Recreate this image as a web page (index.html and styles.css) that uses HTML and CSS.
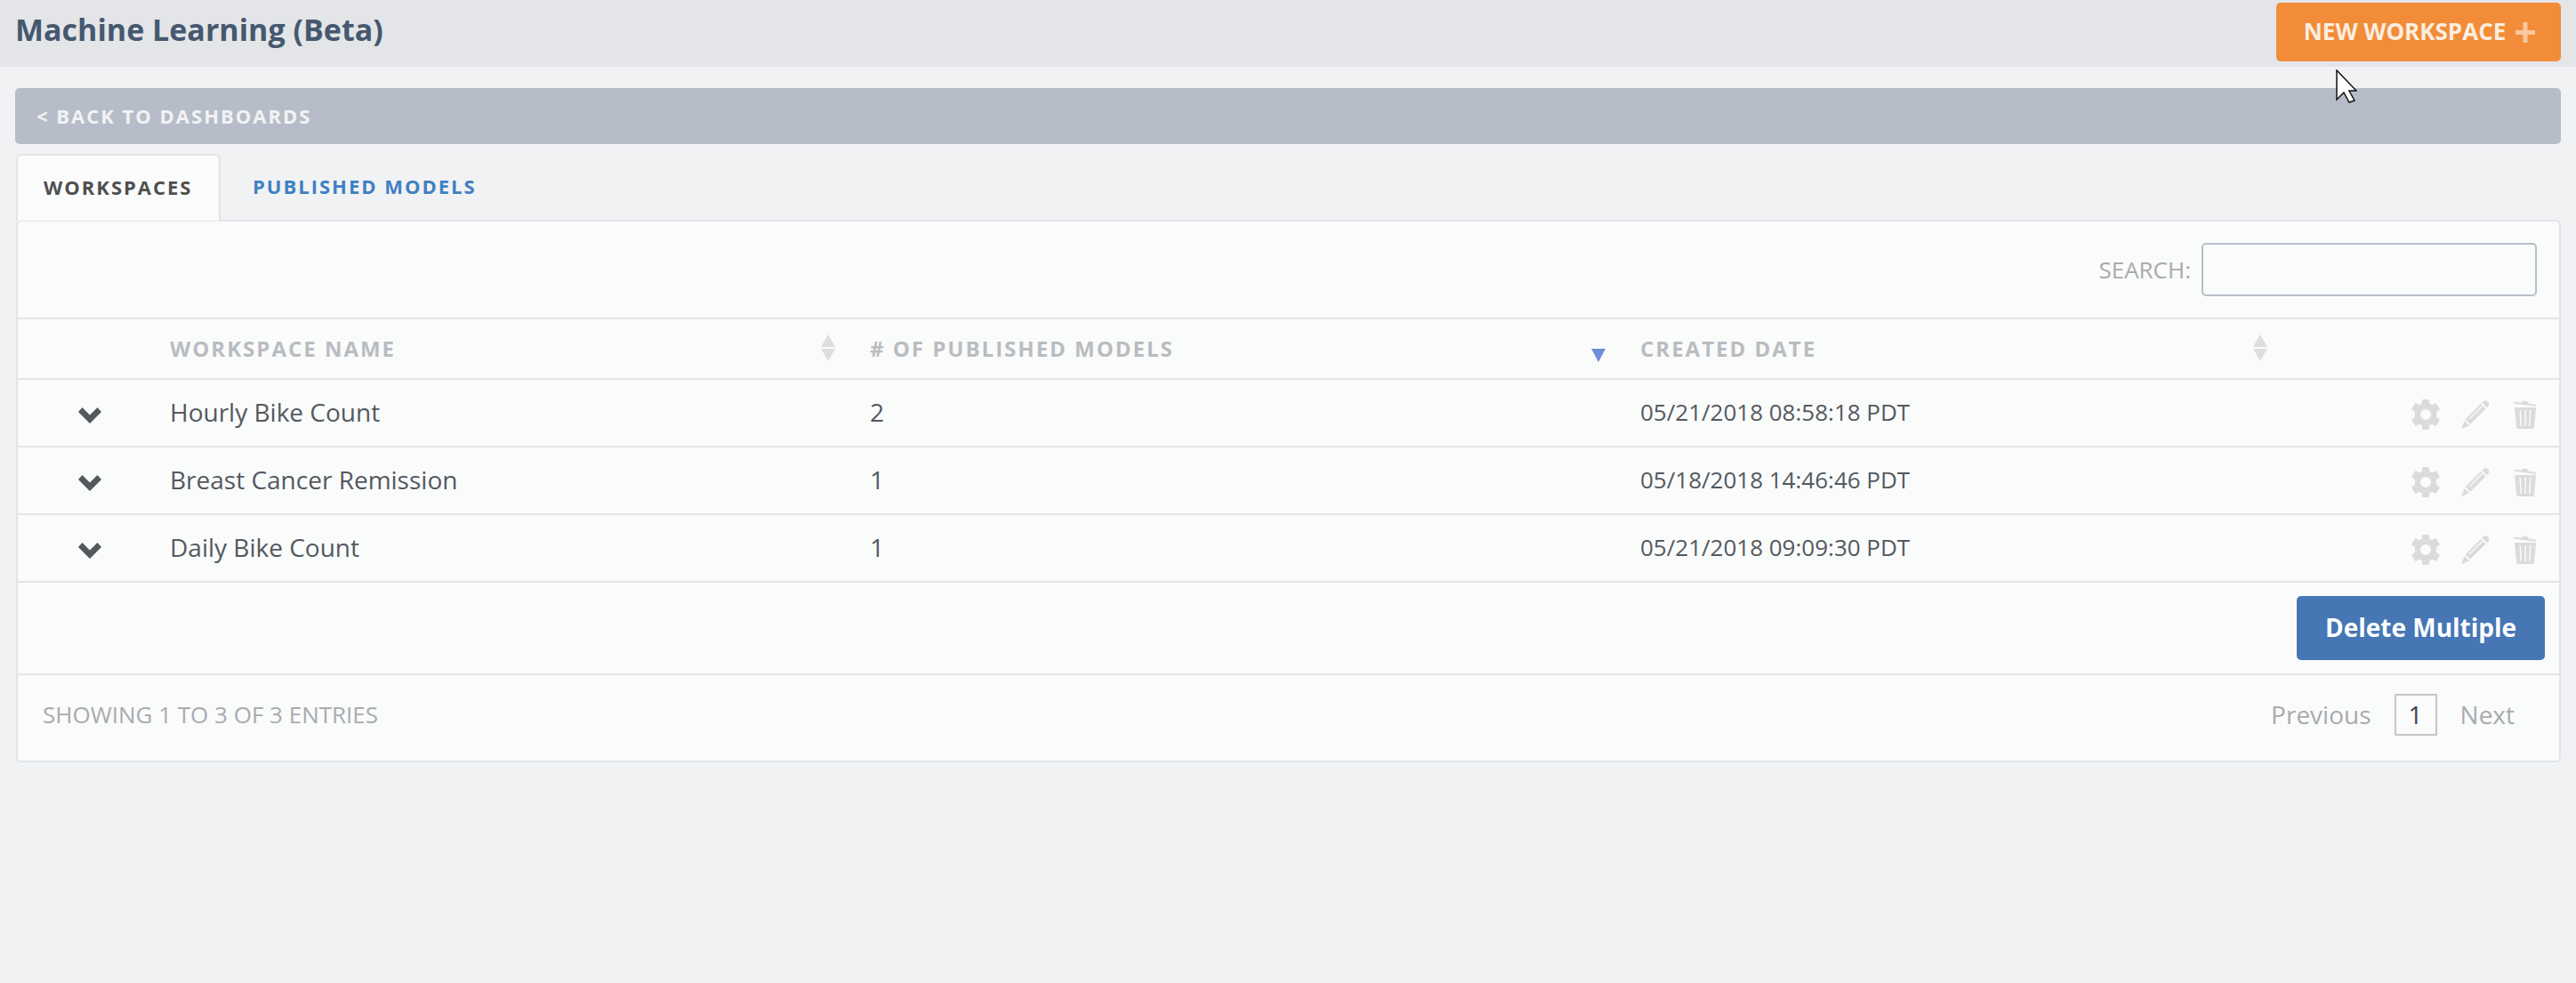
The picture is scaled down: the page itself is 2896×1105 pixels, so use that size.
FILE: index.html
```html
<!DOCTYPE html>
<html lang="en">
<head>
  <meta charset="UTF-8" />
  <title>Machine Learning (Beta)</title>
  <link rel="stylesheet" href="styles.css">
</head>
<body>

<svg width="0" height="0" class="defs">
  <defs>
    <symbol id="gear" viewBox="0 0 32 34">
      <path fill-rule="evenodd" d="M12.500 0h7l1 5 2.500 1.200 4.500-2.200 4.500 7-4 3.200v5.600l4 3.200-4.500 7-4.500-2.200-2.500 1.200-1 5h-7l-1-5-2.500-1.200-4.500 2.200-4.500-7 4-3.200v-5.600l-4-3.200 4.500-7 4.500 2.200 2.500-1.200zM16 11a6 6 0 1 0 0 12 6 6 0 0 0 0-12z"/>
    </symbol>
    <symbol id="pencil" viewBox="0 0 32 32">
      <path d="M25 1.200c1.500-1.300 3.500-1.300 5 .2s1.600 3.400.3 5l-1.500 1.700-5.400-5.400zM22 4l5.500 5.500-17.300 17.300-5.500-5.500zM3.600 23l5.500 5.500-9 3.500z"/>
      <path d="M8.500 20.500 23.500 5.500 24.500 6.500 9.500 21.500z" fill="#fafbfb"/>
    </symbol>
    <symbol id="trash" viewBox="0 0 26 32">
      <path d="M9.500 0.500l7 1-.3 2 8.800 1.500-.3 2L0 3.500l.3-2 8.800 1.300z"/>
      <path fill-rule="evenodd" d="M1 8h24l-2 22c-.1 1.200-1 2-2.200 2H5.200C4 32 3.100 31.200 3 30zM6.500 11l1 18h1.500l-1-18zM12.300 11v18h1.500V11zM18 11l-1 18h1.500l1-18z"/>
    </symbol>
    <symbol id="chevron" viewBox="0 0 26 19">
      <path d="M0 6 4.500 1 13 9.500 21.500 1 26 6 13 19z"/>
    </symbol>
  </defs>
</svg>

<div class="topbar">
  <h1>Machine Learning (Beta)</h1>
  <button class="new-btn">
    NEW WORKSPACE
    <svg class="plus" viewBox="0 0 22 23"><path d="M8.500 0h5v9H22v5h-8.500v9h-5v-9H0V9h8.500z"/></svg>
  </button>
</div>

<div class="content">
  <a class="back-bar">&lt; BACK TO DASHBOARDS</a>

  <div class="tabs">
    <a class="tab active">WORKSPACES</a>
    <a class="tab">PUBLISHED MODELS</a>
  </div>

  <div class="panel">
    <div class="search-row">
      <label for="search">SEARCH:</label>
      <input id="search" type="text">
    </div>

    <table>
      <thead>
        <tr>
          <th class="col-toggle"></th>
          <th class="col-name"><div class="th-inner">WORKSPACE NAME <span class="sort"></span></div></th>
          <th class="col-models"><div class="th-inner">&#35; OF PUBLISHED MODELS <span class="sort-down"></span></div></th>
          <th class="col-date"><div class="th-inner">CREATED DATE <span class="sort"></span></div></th>
          <th></th>
        </tr>
      </thead>
      <tbody>
        <tr>
          <td class="toggle"><svg class="chevron"><use href="#chevron"/></svg></td>
          <td>Hourly Bike Count</td>
          <td>2</td>
          <td class="date">05/21/2018 08:58:18 PDT</td>
          <td>
            <div class="actions">
              <svg class="gear"><use href="#gear"/></svg>
              <svg class="pencil"><use href="#pencil"/></svg>
              <svg class="trash"><use href="#trash"/></svg>
            </div>
          </td>
        </tr>
        <tr>
          <td class="toggle"><svg class="chevron"><use href="#chevron"/></svg></td>
          <td>Breast Cancer Remission</td>
          <td>1</td>
          <td class="date">05/18/2018 14:46:46 PDT</td>
          <td>
            <div class="actions">
              <svg class="gear"><use href="#gear"/></svg>
              <svg class="pencil"><use href="#pencil"/></svg>
              <svg class="trash"><use href="#trash"/></svg>
            </div>
          </td>
        </tr>
        <tr>
          <td class="toggle"><svg class="chevron"><use href="#chevron"/></svg></td>
          <td>Daily Bike Count</td>
          <td>1</td>
          <td class="date">05/21/2018 09:09:30 PDT</td>
          <td>
            <div class="actions">
              <svg class="gear"><use href="#gear"/></svg>
              <svg class="pencil"><use href="#pencil"/></svg>
              <svg class="trash"><use href="#trash"/></svg>
            </div>
          </td>
        </tr>
      </tbody>
    </table>

    <div class="bulk-row">
      <button class="delete-btn">Delete Multiple</button>
    </div>

    <div class="footer-row">
      <span class="info">SHOWING 1 TO 3 OF 3 ENTRIES</span>
      <div class="pager">
        <a>Previous</a>
        <span class="current">1</span>
        <a>Next</a>
      </div>
    </div>
  </div>
</div>

<!-- mouse pointer caught in the capture -->
<svg class="cursor" viewBox="0 0 24 38">
  <path d="M1 1v33l8-8 6 11 6-2-6-11h8z" fill="#fff" stroke="#111" stroke-width="1.500"/>
</svg>

</body>
</html>
```

FILE: styles.css
```css
* { margin: 0; padding: 0; box-sizing: border-box; }

body {
  font-family: 'Open Sans', sans-serif;
  background: #f1f2f4;
  color: #54595f;
  min-height: 100vh;
  position: relative;
}

.defs {
  position: absolute;
}

.topbar {
  height: 75px;
  background: #e3e5e8;
  display: flex;
  justify-content: space-between;
  align-items: flex-start;
  padding: 3px 17px 0 17px;
}

h1 {
  font-size: 34px;
  font-weight: 700;
  line-height: 60px;
  color: #46586f;
}

.new-btn {
  width: 320px;
  height: 66px;
  padding: 0 0 2px 2px;
  display: flex;
  justify-content: center;
  align-items: center;
  gap: 11px;
  background: #f28c38;
  color: #fbeee0;
  border: none;
  border-radius: 5px;
  font-family: inherit;
  font-size: 26px;
  font-weight: 700;
  white-space: nowrap;
}

.plus {
  width: 22px;
  height: 23px;
  margin-top: 2px;
  fill: #f8c9a0;
}

.content {
  padding: 24px 17px 0 17px;
}

.back-bar {
  display: flex;
  align-items: center;
  height: 63px;
  padding: 0 0 2px 24px;
  background: #b7bdc8;
  border-radius: 5px;
  color: #f2f3f5;
  font-size: 22px;
  font-weight: 700;
  letter-spacing: 2px;
}

.tabs {
  display: flex;
  margin-top: 11px;
  height: 75px;
  margin-bottom: -1px;
  position: relative;
}

.tab {
  display: flex;
  align-items: center;
  padding: 0 36px 3px 36px;
  font-size: 22px;
  font-weight: 700;
  letter-spacing: 2px;
  color: #3f80c2;
}

.tab.active {
  width: 230px;
  padding: 0 0 3px 29px;
  color: #4f4f4f;
  background: #fafbfb;
  border: 2px solid #e2e4e8;
  border-bottom: none;
  border-radius: 6px 6px 0 0;
  margin-left: 1px;
}

.panel {
  height: 610px;
  background: #fafbfb;
  border: 2px solid #e2e4ea;
  border-radius: 6px;
  margin-left: 1px;
  display: flex;
  flex-direction: column;
}

.search-row {
  height: 108px;
  display: flex;
  justify-content: flex-end;
  align-items: center;
  gap: 12px;
  padding-right: 25px;
}

.search-row label {
  font-size: 26px;
  color: #a9abad;
}

.search-row input {
  width: 377px;
  height: 60px;
  background: #fafbfb;
  border: 2px solid #b9bec8;
  border-radius: 5px;
}

table {
  width: 100%;
  border-collapse: collapse;
  table-layout: fixed;
}

th, td {
  border-top: 2px solid #e3e5ea;
  text-align: left;
}

th {
  height: 68px;
  padding-bottom: 2px;
  font-size: 24px;
  font-weight: 700;
  letter-spacing: 2px;
  color: #b9bcc1;
}

td {
  height: 76px;
  padding-bottom: 2px;
  font-size: 28px;
  color: #54595f;
}

tr:last-child td {
  height: 75px;
}

td.date {
  font-size: 26px;
}

.col-toggle { width: 171px; }
.col-name { width: 787px; }
.col-models { width: 866px; }
.col-date { width: 736px; }

.th-inner {
  display: flex;
  justify-content: space-between;
  align-items: center;
}

.col-name .th-inner { padding-right: 39px; }
.col-models .th-inner { padding-right: 39px; }
.col-date .th-inner { padding-right: 31px; }

/* sort arrows are two css triangles */
.sort {
  width: 16px;
  height: 30px;
  display: flex;
  flex-direction: column;
  justify-content: space-between;
}

.sort::before,
.sort::after {
  content: "";
  border-left: 8px solid transparent;
  border-right: 8px solid transparent;
}

.sort::before {
  border-bottom: 14px solid #dcdee0;
}

.sort::after {
  border-top: 14px solid #dcdee0;
}

.sort-down {
  width: 0;
  height: 0;
  border-left: 8px solid transparent;
  border-right: 8px solid transparent;
  border-top: 15px solid #6f8ed8;
  margin-top: 16px;
}

.toggle {
  padding-bottom: 0;
}

.chevron {
  width: 26px;
  height: 19px;
  fill: #54595f;
  display: block;
  margin: 4px 0 0 68px;
}

.actions {
  display: flex;
  justify-content: flex-end;
  align-items: center;
  gap: 24px;
  padding-right: 25px;
  padding-top: 6px;
  fill: #d9dbdd;
}

.actions svg {
  display: block;
}

.gear { width: 32px; height: 34px; }
.pencil { width: 32px; height: 32px; }
.trash { width: 26px; height: 32px; margin-left: 3px; }

.bulk-row {
  height: 104px;
  border-top: 2px solid #e0e2e4;
  padding-right: 16px;
  display: flex;
  justify-content: flex-end;
  align-items: center;
}

.delete-btn {
  width: 279px;
  height: 72px;
  padding-bottom: 2px;
  background: #4677b4;
  color: #fff;
  border: none;
  border-radius: 5px;
  font-family: inherit;
  font-size: 28px;
  font-weight: 700;
}

.footer-row {
  flex: 1;
  border-top: 2px solid #e3e5ea;
  display: flex;
  justify-content: space-between;
  align-items: center;
  padding: 0 50px 8px 28px;
}

.info {
  font-size: 26px;
  color: #a9abad;
}

.pager {
  display: flex;
  align-items: center;
  font-size: 28px;
  color: #a9abad;
}

.current {
  width: 48px;
  height: 47px;
  border: 2px solid #c4c6c8;
  color: #3e4450;
  display: flex;
  justify-content: center;
  align-items: center;
  margin: 0 26px;
}

.cursor {
  position: absolute;
  left: 2626px;
  top: 78px;
  width: 24px;
  height: 38px;
}
```
